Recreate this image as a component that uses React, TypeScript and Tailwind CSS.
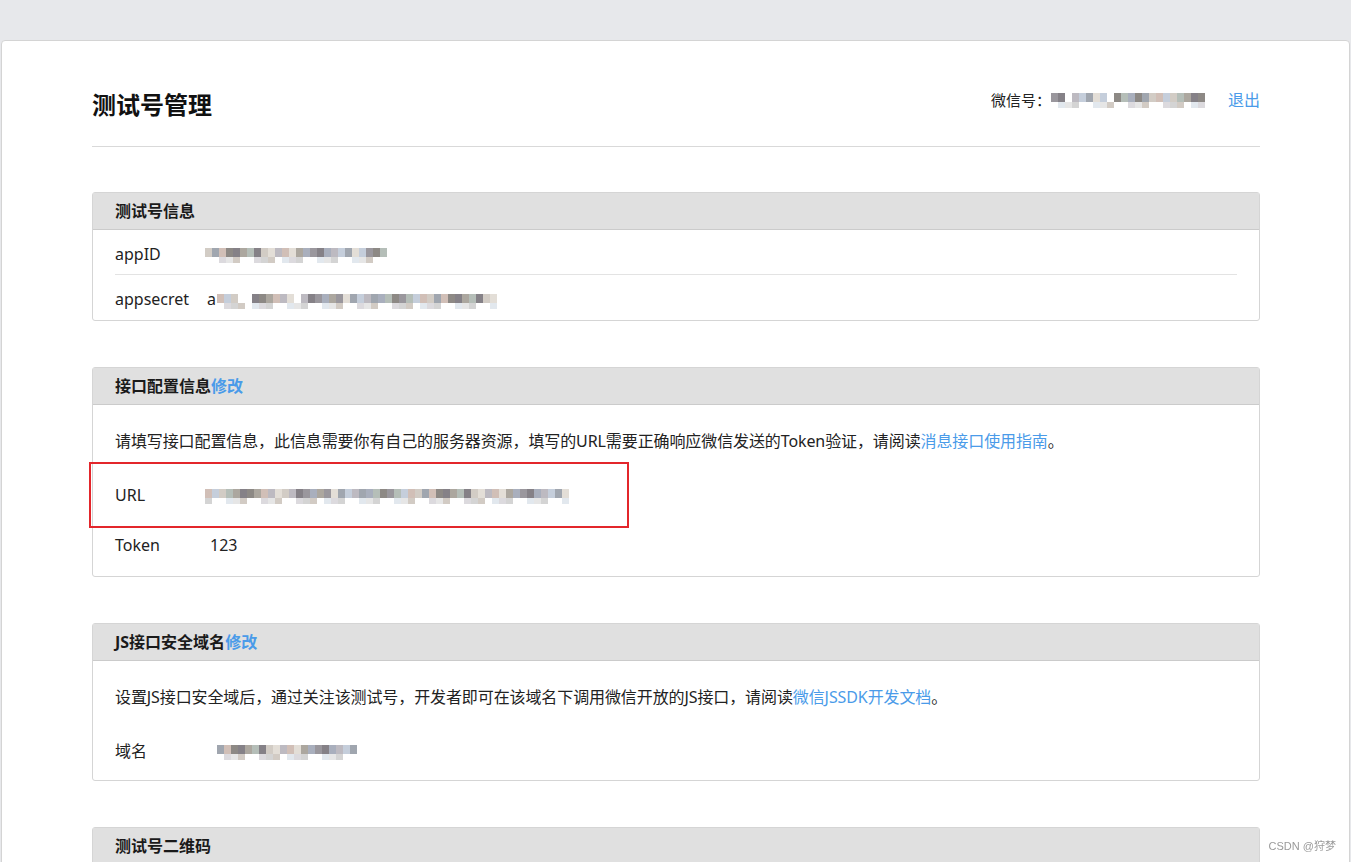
import React from 'react';

// pixelated (blurred) values, as in the screenshot
const tones = [
  'bg-[#9a979d]',
  'bg-[#bdbac1]',
  'bg-[#aca79f]',
  'bg-[#d2ccc5]',
  'bg-[#8d8985]',
  'bg-[#c5cedb]',
  'bg-[#a9afbd]',
  'bg-[#e3ded7]',
  'bg-[#858187]',
  'bg-[#d1bfb7]',
  'bg-[#b5beb8]',
  'bg-[#a0a6af]',
];
const lights = [
  'bg-[#e6e6e6]',
  'bg-transparent',
  'bg-[#e2e8ee]',
  'bg-[#d4d4d4]',
  'bg-transparent',
  'bg-[#dcdade]',
  'bg-[#d2cbc4]',
  'bg-transparent',
];

const Mosaic: React.FC<{ cols: number; seed: number; gaps?: number[] }> = ({ cols, seed, gaps = [] }) => (
  <div className="flex mt-[4px]">
    {Array.from({ length: cols }).map((_, i) => {
      const gap = gaps.includes(i);
      const top = gap ? 'bg-transparent' : tones[(i * 7 + seed * 3 + ((i * i) % 5)) % tones.length];
      const bottom = lights[(i * 5 + seed + (i % 3)) % lights.length];
      return (
        <div key={i} className="flex flex-col w-[7px]">
          <div className={`h-[9px] ${top}`} />
          <div className={`h-[6px] ${bottom}`} />
        </div>
      );
    })}
  </div>
);

interface PanelProps {
  title: string;
  edit?: boolean;
  className?: string;
  children?: React.ReactNode;
}

const Panel: React.FC<PanelProps> = ({ title, edit, className = '', children }) => (
  <div className={`relative border border-[#d5d5d5] rounded-[3px] ${className}`}>
    <div className="h-[37px] bg-[#e0e0e0] border-b border-[#cbcbcb] px-[22px] flex items-center text-[16px] font-bold text-[#1a1a1a]">
      {title}
      {edit && <a className="text-[#4a9be9] cursor-pointer">修改</a>}
    </div>
    {children}
  </div>
);

const Row: React.FC<{ label: string; h: string; children?: React.ReactNode; divider?: boolean }> = ({
  label,
  h,
  children,
  divider,
}) => (
  <div className={`flex items-center pt-[3px] ${h} ${divider ? 'border-b border-[#e3e3e3]' : ''}`}>
    <div className="w-[92px] text-[16px] text-[#222]">{label}</div>
    <div className="flex items-center text-[16px] text-[#222]">{children}</div>
  </div>
);

export default function App() {
  return (
    <div className="min-h-screen bg-[#e7e8eb] pt-[40px] px-[1px] font-['Noto_Sans','Noto_Sans_CJK_SC',sans-serif]">
      <div className="bg-white border border-[#d4d4d4] rounded-t-[4px] pl-[90px] pr-[89px] pb-[60px]">
        {/* page header */}
        <div className="flex justify-between items-start pt-[40px] pb-[25px] border-b border-[#d9d9d9]">
          <h1 className="mt-[8px] h-[32px] leading-[32px] text-[24px] font-bold text-[#111]">测试号管理</h1>
          <div className="mt-[7px] h-[24px] flex items-center">
            <span className="text-[15px] text-[#222]">微信号：</span>
            <div className="-mt-[4px]">
              <Mosaic cols={22} seed={4} gaps={[2, 8]} />
            </div>
            <a className="ml-[23px] text-[16px] text-[#4a9be9] cursor-pointer">退出</a>
          </div>
        </div>

        {/* 测试号信息 */}
        <Panel title="测试号信息" className="mt-[45px]">
          <div className="px-[22px]">
            <Row label="appID" h="h-[45px]" divider>
              <div className="-ml-[2px]">
                <Mosaic cols={26} seed={1} />
              </div>
            </Row>
            <Row label="appsecret" h="h-[45px]">
              <span className="mr-[1px]">a</span>
              <Mosaic cols={40} seed={7} gaps={[3, 4, 11]} />
            </Row>
          </div>
        </Panel>

        {/* 接口配置信息 */}
        <Panel title="接口配置信息" edit className="mt-[46px]">
          <div className="px-[22px] pt-[20px] pb-[8px]">
            <p className="h-[32px] leading-[32px] text-[16px] text-[#222] tracking-[-0.1px]">
              请填写接口配置信息，此信息需要你有自己的服务器资源，填写的URL需要正确响应微信发送的Token验证，请阅读
              <a className="text-[#4a9be9] cursor-pointer">消息接口使用指南</a>。
            </p>
            <div className="mt-[11px]">
              <Row label="URL" h="h-[50px]">
                <div className="-ml-[2px]">
                  <Mosaic cols={52} seed={3} />
                </div>
              </Row>
              <Row label="Token" h="h-[50px]">
                <span className="ml-[3px]">123</span>
              </Row>
            </div>
          </div>
          <div className="absolute -left-[4px] top-[94px] w-[540px] h-[66px] border-2 border-[#e3262b]" />
        </Panel>

        {/* JS接口安全域名 */}
        <Panel title="JS接口安全域名" edit className="mt-[46px]">
          <div className="px-[22px] pt-[20px] pb-[6px]">
            <p className="h-[32px] leading-[32px] text-[16px] text-[#222] tracking-[-0.1px]">
              设置JS接口安全域后，通过关注该测试号，开发者即可在该域名下调用微信开放的JS接口，请阅读
              <a className="text-[#4a9be9] cursor-pointer">微信JSSDK开发文档</a>。
            </p>
            <div className="mt-[11px]">
              <Row label="域名" h="h-[50px]">
                <div className="ml-[3px]">
                  <Mosaic cols={21} seed={9} gaps={[0]} />
                </div>
              </Row>
            </div>
          </div>
        </Panel>

        {/* 测试号二维码 */}
        <Panel title="测试号二维码" className="mt-[46px]">
          <div className="h-[260px]" />
        </Panel>
      </div>

      <div className="fixed right-[15px] bottom-[8px] text-[11px] leading-[16px] text-[#9a9a9a] font-['Liberation_Sans','Noto_Sans_CJK_SC',sans-serif]">
        CSDN @狩梦
      </div>
    </div>
  );
}
